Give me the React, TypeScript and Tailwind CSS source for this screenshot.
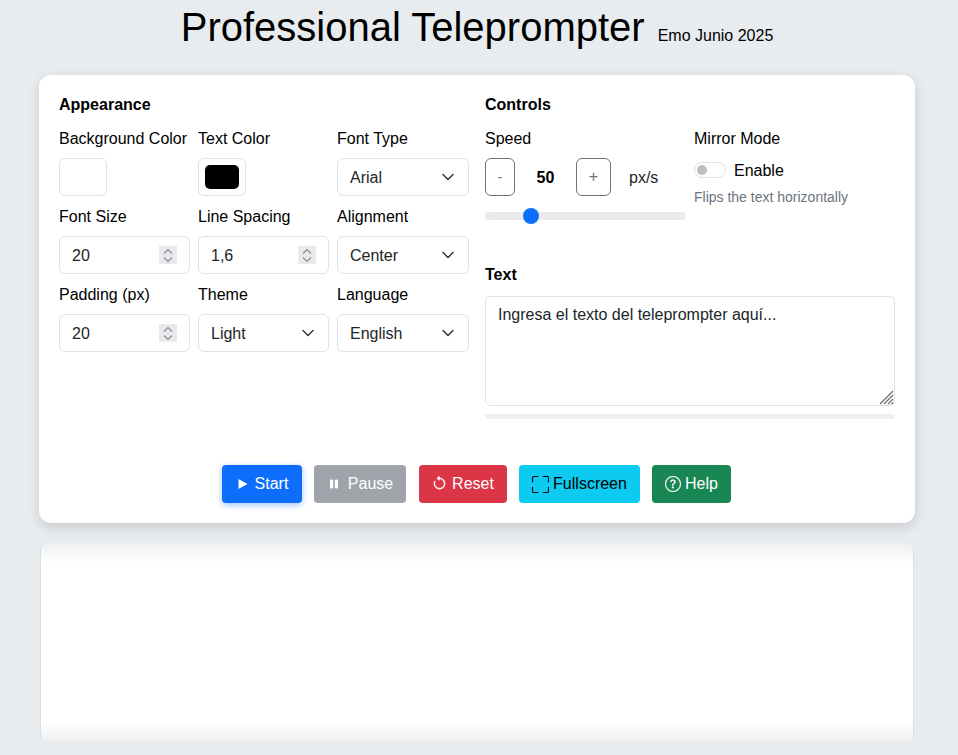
import React from "react";

function Chevron() {
  return (
    <svg className="absolute right-[13px] top-1/2 -translate-y-1/2 pointer-events-none" width="16" height="16" viewBox="0 0 16 16" fill="none">
      <path d="M3 5.5l5 5 5-5" stroke="#343a40" strokeWidth="1.5" strokeLinecap="round" strokeLinejoin="round" />
    </svg>
  );
}

function Spinner() {
  return (
    <span className="absolute right-[13px] top-[10px] w-[18px] h-[18px] bg-[#e9e9ed] pointer-events-none flex flex-col items-center justify-center gap-[3px]">
      <svg width="10" height="5" viewBox="0 0 10 5" fill="none"><path d="M1 4.5l4-4 4 4" stroke="#8a8a8a" strokeWidth="1.1" /></svg>
      <svg width="10" height="5" viewBox="0 0 10 5" fill="none"><path d="M1 0.5l4 4 4-4" stroke="#8a8a8a" strokeWidth="1.1" /></svg>
    </span>
  );
}

function Field({ label, children }: { label: string; children: React.ReactNode }) {
  return (
    <div className="flex flex-col">
      <label className="text-[16px] leading-[26px] mb-[6px] whitespace-nowrap text-[#000]">{label}</label>
      {children}
    </div>
  );
}

function Num({ value }: { value: string }) {
  return (
    <div className="relative">
      <input readOnly value={value} className="w-full h-[38px] border border-[#dee2e6] rounded-[6px] pl-3 pr-8 pt-[2px] text-[16px] text-[#212529] bg-white outline-none" />
      <Spinner />
    </div>
  );
}

function Sel({ value }: { value: string }) {
  return (
    <div className="relative">
      <select defaultValue={value} className="appearance-none w-full h-[38px] border border-[#dee2e6] rounded-[6px] pl-3 pr-9 pt-[2px] text-[16px] text-[#212529] bg-white outline-none">
        <option>{value}</option>
      </select>
      <Chevron />
    </div>
  );
}

function Swatch({ color, inner }: { color: string; inner?: boolean }) {
  return (
    <div className="w-[48px] h-[38px] border border-[#dee2e6] rounded-[6px] bg-white p-[6px]">
      {inner ? <div className={`w-full h-full rounded-[5px] ${color}`} /> : null}
    </div>
  );
}

export default function App() {
  return (
    <div className="min-h-[755px] h-[755px] overflow-hidden bg-[#e9ecef] font-['Liberation_Sans',Arial,sans-serif] text-black">
      <h1 className="flex items-baseline justify-center h-[55px] pr-[4px] text-[40px] leading-[54px] font-normal">
        <span>Professional Teleprompter</span>
        <span className="text-[16px] ml-[13px]">Emo Junio 2025</span>
      </h1>

      <div className="ml-[39px] mr-[43px] mt-[20px] h-[448px] bg-white rounded-[12px] shadow-[0_4px_12px_rgba(0,0,0,0.15)] px-5 pt-[18px]">
        <div className="flex gap-4 h-[372px]">
          <div className="w-[410px]">
            <h2 className="text-[16px] leading-[24px] font-bold mb-[9px]">Appearance</h2>
            <div className="grid grid-cols-[131px_131px_132px] gap-x-2 gap-y-2">
              <Field label="Background Color"><Swatch color="bg-white" /></Field>
              <Field label="Text Color"><Swatch color="bg-black" inner /></Field>
              <Field label="Font Type"><Sel value="Arial" /></Field>
              <Field label="Font Size"><Num value="20" /></Field>
              <Field label="Line Spacing"><Num value="1,6" /></Field>
              <Field label="Alignment"><Sel value="Center" /></Field>
              <Field label="Padding (px)"><Num value="20" /></Field>
              <Field label="Theme"><Sel value="Light" /></Field>
              <Field label="Language"><Sel value="English" /></Field>
            </div>
          </div>

          <div className="w-[410px]">
            <h2 className="text-[16px] leading-[24px] font-bold mb-[9px]">Controls</h2>
            <div className="flex gap-2">
              <div className="w-[201px]">
                <div className="text-[16px] leading-[26px] mb-[6px]">Speed</div>
                <div className="flex items-center h-[38px]">
                  <button className="w-[30px] h-[38px] border border-[#6c757d] rounded-[6px] text-[#6c757d] text-[14px]">-</button>
                  <span className="w-[61px] pt-[2px] text-center font-bold text-[16px]">50</span>
                  <button className="w-[35px] h-[38px] border border-[#6c757d] rounded-[6px] text-[#6c757d] text-[16px]">+</button>
                  <span className="ml-[18px] pt-[2px] text-[16px] text-[#212529]">px/s</span>
                </div>
                <div className="relative mt-[16px] h-[8px] rounded-[4px] bg-[#e9ecef]">
                  <span className="absolute left-[38px] -top-[4px] w-[16px] h-[16px] rounded-full bg-[#0d6efd]" />
                </div>
              </div>
              <div>
                <div className="text-[16px] leading-[26px] mb-[6px]">Mirror Mode</div>
                <div className="flex items-center gap-2 h-[24px] mt-[1px]">
                  <span className="relative w-[32px] h-[16px] rounded-[8px] border border-[#dee2e6] bg-white">
                    <span className="absolute left-[2px] top-[2px] w-[10px] h-[10px] rounded-full bg-[#bfbfbf]" />
                  </span>
                  <span className="text-[16px] pt-[2px]">Enable</span>
                </div>
                <div className="text-[14px] leading-[21px] text-[#6c757d] mt-[5px] whitespace-nowrap">Flips the text horizontally</div>
              </div>
            </div>

            <h2 className="text-[16px] leading-[24px] font-bold mt-[43px] mb-[9px]">Text</h2>
            <div className="relative h-[110px]">
              <textarea readOnly value="Ingresa el texto del teleprompter aquí..." className="block w-full h-[110px] border border-[#dee2e6] rounded-[6px] px-3 py-[6px] text-[16px] leading-[24px] text-[#212529] bg-white outline-none resize-none" />
              <svg className="absolute right-[1px] bottom-[1px] pointer-events-none" width="15" height="15" viewBox="0 0 15 15" fill="none">
                <path d="M1 14L14 1M5 14L14 5M9 14l5-5M12.5 14l1.5-1.5" stroke="#707070" strokeWidth="1.3" />
              </svg>
            </div>
            <div className="mt-[8px] h-[5px] rounded-[3px] bg-[#f0f0f0]" />
          </div>
        </div>

        <div className="flex justify-center gap-3 pr-[1px] text-[16px]">
          <button className="h-[38px] w-[80px] pl-[2px] rounded-[4px] bg-[#0d6efd] text-white flex items-center justify-center gap-[7px] shadow-[0_2px_6px_rgba(13,110,253,0.4)]">
            <svg width="10" height="10" viewBox="0 0 10 10"><path d="M0.5 0v10l9-5z" fill="#fff" /></svg>
            Start
          </button>
          <button className="h-[38px] w-[92px] pl-[2px] rounded-[4px] bg-[#a0a4aa] text-white flex items-center justify-center gap-[9px]">
            <svg width="10" height="10" viewBox="0 0 10 10"><rect x="1" y="0.5" width="3.2" height="9" rx="1.2" fill="#fff" /><rect x="5.8" y="0.5" width="3.2" height="9" rx="1.2" fill="#fff" /></svg>
            Pause
          </button>
          <button className="h-[38px] w-[88px] ml-[1px] rounded-[4px] bg-[#dc3545] text-white flex items-center justify-center gap-[5px]">
            <svg className="-translate-y-[1px]" width="15" height="15" viewBox="0 0 16 16" fill="#fff" stroke="#fff" strokeWidth="0.5"><path fillRule="evenodd" d="M8 3a5 5 0 1 1-4.546 2.914.5.5 0 0 0-.908-.417A6 6 0 1 0 8 2z" /><path d="M8 4.466V.534a.25.25 0 0 0-.41-.192L5.23 2.308a.25.25 0 0 0 0 .384l2.36 1.966A.25.25 0 0 0 8 4.466" /></svg>
            Reset
          </button>
          <button className="h-[38px] w-[121px] rounded-[4px] bg-[#0dcaf0] text-black flex items-center justify-center gap-[4px]">
            <svg width="17" height="17" viewBox="0 0 16 16" fill="#000"><path d="M1.5 1a.5.5 0 0 0-.5.5v4a.5.5 0 0 1-1 0v-4A1.5 1.5 0 0 1 1.5 0h4a.5.5 0 0 1 0 1zM10 .5a.5.5 0 0 1 .5-.5h4A1.5 1.5 0 0 1 16 1.5v4a.5.5 0 0 1-1 0v-4a.5.5 0 0 0-.5-.5h-4a.5.5 0 0 1-.5-.5M.5 10a.5.5 0 0 1 .5.5v4a.5.5 0 0 0 .5.5h4a.5.5 0 0 1 0 1h-4A1.5 1.5 0 0 1 0 14.5v-4a.5.5 0 0 1 .5-.5m15 0a.5.5 0 0 1 .5.5v4a1.5 1.5 0 0 1-1.5 1.5h-4a.5.5 0 0 1 0-1h4a.5.5 0 0 0 .5-.5v-4a.5.5 0 0 1 .5-.5" /></svg>
            Fullscreen
          </button>
          <button className="h-[38px] w-[79px] rounded-[4px] bg-[#198754] text-white flex items-center justify-center gap-[4px]">
            <svg width="16" height="16" viewBox="0 0 16 16" fill="#fff" stroke="#fff" strokeWidth="0.2"><path d="M8 15A7 7 0 1 1 8 1a7 7 0 0 1 0 14m0 1A8 8 0 1 0 8 0a8 8 0 0 0 0 16" /><path d="M5.255 5.786a.237.237 0 0 0 .241.247h.825c.138 0 .248-.113.266-.25.09-.656.54-1.134 1.342-1.134.686 0 1.314.343 1.314 1.168 0 .635-.374.927-.965 1.371-.673.489-1.206 1.06-1.168 1.987l.003.217a.25.25 0 0 0 .25.246h.811a.25.25 0 0 0 .25-.25v-.105c0-.718.273-.927 1.01-1.486.609-.463 1.244-.977 1.244-2.056 0-1.511-1.276-2.241-2.673-2.241-1.267 0-2.655.59-2.75 2.286m1.557 5.763c0 .533.425.927 1.01.927.609 0 1.028-.394 1.028-.927 0-.552-.42-.94-1.029-.94-.584 0-1.009.388-1.009.94" /></svg>
            Help
          </button>
        </div>
      </div>

      <div className="relative ml-[40px] mr-[44px] mt-[20px] h-[199px] rounded-[8px] bg-white overflow-hidden border-x border-[#dcdfe2]">
        <div className="absolute inset-x-0 top-0 h-[20px] bg-gradient-to-b from-[#edeff1] to-transparent" />
        <div className="absolute inset-x-0 bottom-0 h-[20px] bg-gradient-to-t from-[#edeff1] to-transparent" />
      </div>
    </div>
  );
}
